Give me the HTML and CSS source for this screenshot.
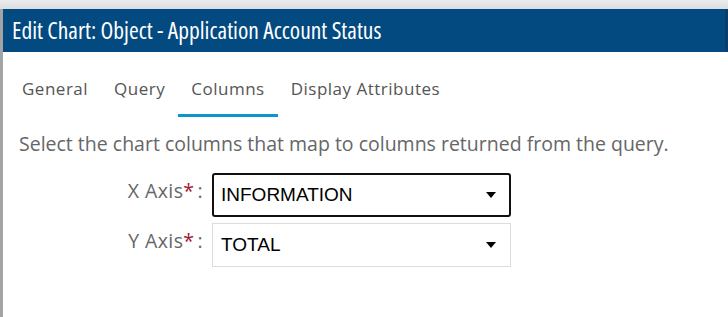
FILE: index.html
```html
<!DOCTYPE html>
<html>
  <head>
    <title>Edit Chart</title>
    <link rel="stylesheet" href="styles.css">
  </head>
  <body>
    <div class="top-strip"></div>
    <div class="dialog">
      <div class="dialog-header">
        <span class="dialog-title">Edit Chart: Object - Application Account Status</span>
      </div>

      <div class="tabs">
        <div class="tab">General</div>
        <div class="tab">Query</div>
        <div class="tab active">Columns</div>
        <div class="tab">Display Attributes</div>
      </div>

      <div class="tab-body">
        <p class="hint">Select the chart columns that map to columns returned from the query.</p>

        <div class="field-grid">
          <label class="field-label">X Axis<span class="req">*</span>:</label>
          <div class="select focused">
            <span>INFORMATION</span>
            <svg class="caret" width="10" height="6" viewBox="0 0 10 6"><path d="M0 0h10L5 6z" fill="#000"/></svg>
          </div>

          <label class="field-label">Y Axis<span class="req">*</span>:</label>
          <div class="select">
            <span>TOTAL</span>
            <svg class="caret" width="10" height="6" viewBox="0 0 10 6"><path d="M0 0h10L5 6z" fill="#000"/></svg>
          </div>
        </div>
      </div>
    </div>
  </body>
</html>
```

FILE: styles.css
```css
body {
  margin: 0;
  background: #fff;
  font-family: "Open Sans", sans-serif;
}
.top-strip {
  height: 9px;
  background: linear-gradient(#e9ebec, #dcdedf);
}
.dialog {
  border-left: 3px solid #a4a4a4;
  height: 308px;
}
.dialog-header {
  height: 43px;
  background: #024a80;
  border-right: 3px solid #0b3f6a;
  padding-left: 9px;
  color: #fff;
  line-height: 43px;
}
.dialog-title {
  font-size: 23.5px;
  font-stretch: 75%;
}
.tabs {
  display: flex;
  margin-top: 12px;
  padding-left: 6px;
}
.tab {
  padding: 13px 13px;
  font-size: 17px;
  line-height: 24px;
  color: #555;
  letter-spacing: 0.5px;
  border-bottom: 3px solid transparent;
}
.tab.active {
  border-bottom-color: #0b96cf;
}
.tab-body {
  padding: 0 16px;
}
.hint {
  margin: 14px 0 16px;
  font-size: 19.5px;
  line-height: 26px;
  color: #666;
}
.field-grid {
  display: grid;
  grid-template-columns: 184px 299px;
  column-gap: 9px;
  row-gap: 6px;
}
.field-label {
  text-align: right;
  font-size: 19.5px;
  line-height: 26px;
  letter-spacing: 0.4px;
  color: #666;
  padding-top: 5px;
}
.req {
  color: #a3152f;
  margin-right: 3px;
}
.select {
  box-sizing: border-box;
  height: 44px;
  display: flex;
  align-items: center;
  justify-content: space-between;
  padding: 0 14px 0 8px;
  border: 1px solid #ddd;
  font-family: "Liberation Sans", Arial, sans-serif;
  font-size: 19px;
  color: #000;
}
.select.focused {
  border: 2px solid #111;
  border-radius: 3px;
  padding-left: 7px;
  padding-right: 13px;
}
```
